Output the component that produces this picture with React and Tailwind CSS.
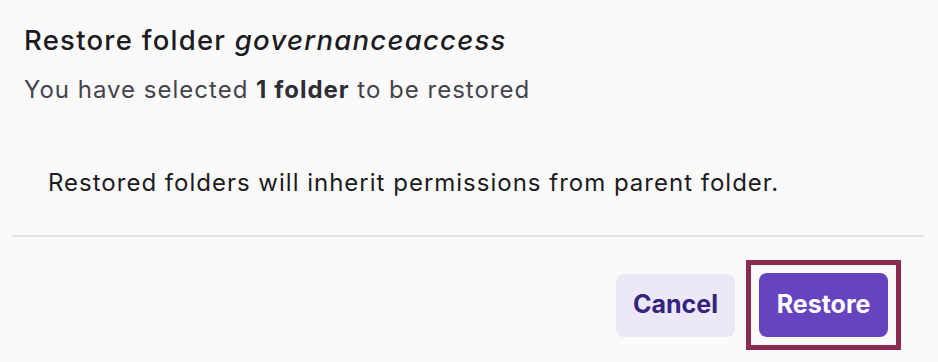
export default function App() {
  return (
    <div className="min-h-[362px] w-full bg-[#fafafa] font-['Inter','Liberation_Sans',sans-serif] antialiased">
      <div className="mx-[12px] w-[912px] pt-[22px]">
        <div className="px-[12px]">
          <h2 className="text-[27.5px] leading-[36px] font-medium tracking-[1.25px] text-[#1c1b22]">
            Restore folder <em className="italic">governanceaccess</em>
          </h2>
          <p className="mt-[14px] text-[24px] leading-[36px] tracking-[1px] text-[#45434d]">
            You have selected <strong className="font-bold text-[#2f2d36]">1 folder</strong> to be restored
          </p>
          <p className="mt-[57px] pl-[24px] text-[24px] leading-[36px] tracking-[1px] text-[#1c1b22]">
            Restored folders will inherit permissions from parent folder.
          </p>
        </div>
        <div className="mt-[34px] h-[2px] bg-[#e3e1e8]" />
        <div className="flex justify-end items-center gap-[24px] pt-[36px] pr-[36px]">
          <button className="h-[63px] w-[119px] rounded-[8px] bg-[#ece8f6] text-[25px] font-bold text-[#35237f]">
            Cancel
          </button>
          <div className="border-[5px] border-[#8c2b50] p-[8px] -m-[13px]">
            <button className="h-[64px] w-[129px] rounded-[8px] bg-[#6644c0] text-[25px] font-bold text-white block">
              Restore
            </button>
          </div>
        </div>
      </div>
    </div>
  );
}
